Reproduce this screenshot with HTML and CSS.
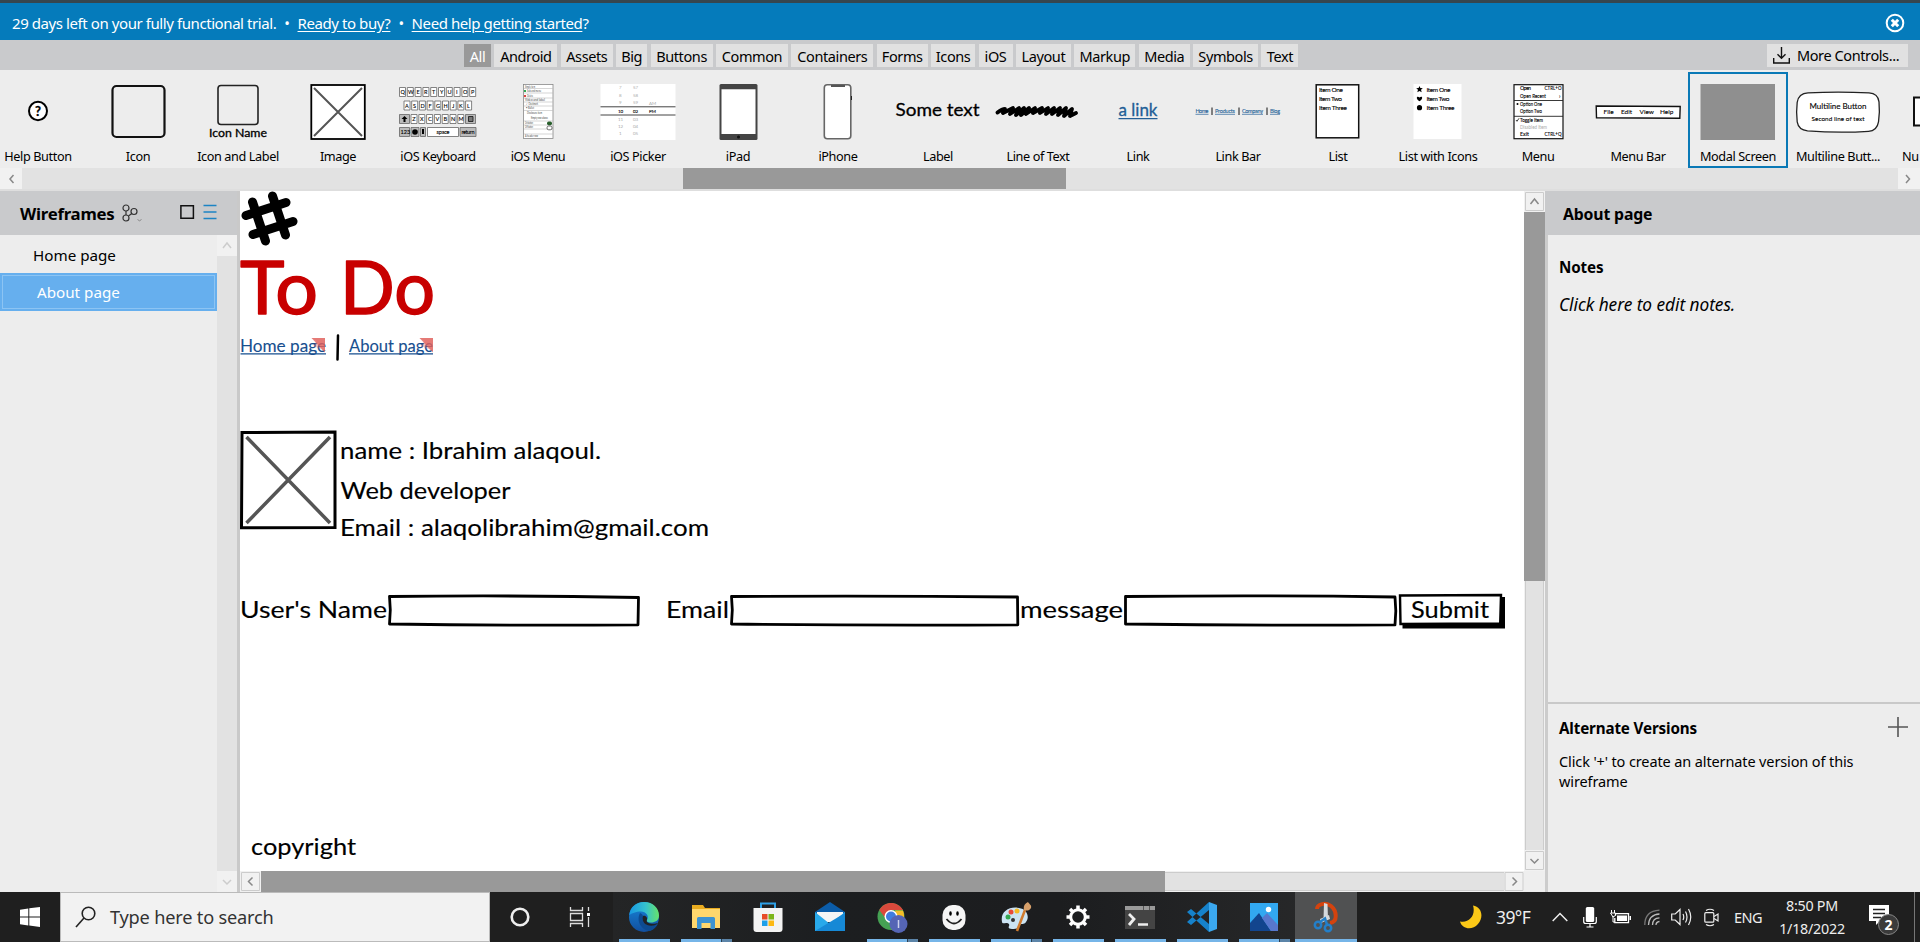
FILE: index.html
```html
<!DOCTYPE html>
<html lang="en">
<head>
<meta charset="utf-8">
<title>About page</title>
<link rel="stylesheet" href="styles.css">
</head>
<body>
<div class="trial">
  <p class="trial-text">29 days left on your fully functional trial. <b>•</b> <u>Ready to buy?</u> <b>•</b> <u>Need help getting started</u>?</p>
  <svg class="trial-close" width="20" height="20" viewBox="0 0 20 20"><circle cx="10" cy="10" r="8.3" fill="none" stroke="#fff" stroke-width="2"/><path d="M6.8 6.8l6.4 6.4M13.2 6.8l-6.4 6.4" stroke="#fff" stroke-width="3"/></svg>
</div>

<div class="tabs">
  <div class="tab-list">
    <span class="tab active">All</span><span class="tab">Android</span><span class="tab">Assets</span><span class="tab">Big</span><span class="tab">Buttons</span><span class="tab">Common</span><span class="tab">Containers</span><span class="tab">Forms</span><span class="tab">Icons</span><span class="tab">iOS</span><span class="tab">Layout</span><span class="tab">Markup</span><span class="tab">Media</span><span class="tab">Symbols</span><span class="tab">Text</span>
  </div>
  <div class="tab more"><svg width="17" height="17" viewBox="0 0 17 17" fill="none" stroke="#111" stroke-width="1.4"><path d="M8.5 0v11M4.5 7.2l4 4 4-4M.7 11v5h15.6v-5"/></svg><span>More Controls...</span></div>
</div>

<div class="library">
  <div class="item"><svg class="thumb" viewBox="0 0 96 72"><ellipse cx="48" cy="36" rx="9" ry="9.2" fill="#fff" stroke="#000" stroke-width="2"/><text x="48" y="41" class="hand bold" font-size="13" text-anchor="middle">?</text></svg><span>Help Button</span></div>
  <div class="item"><svg class="thumb" viewBox="0 0 96 72"><rect x="22.500" y="11" width="52" height="51" rx="4" fill="none" stroke="#111" stroke-width="2.200"/></svg><span>Icon</span></div>
  <div class="item"><svg class="thumb" viewBox="0 0 96 72"><rect x="28" y="10.500" width="40" height="39" rx="3" fill="none" stroke="#222" stroke-width="1.600"/><text x="19" y="61.500" class="hand" font-size="11.500" textLength="58" lengthAdjust="spacingAndGlyphs">Icon Name</text></svg><span>Icon and Label</span></div>
  <div class="item"><svg class="thumb" viewBox="0 0 96 72"><rect x="21.300" y="10" width="53.500" height="54" fill="#fff" stroke="#000" stroke-width="1.800"/><path d="M24 13l48 48M72 13L24 61" stroke="#555" stroke-width="2"/></svg><span>Image</span></div>
  <div class="item"><svg class="thumb" viewBox="0 0 96 72">
    <g fill="#fff" stroke="#666" stroke-width=".8"><path d="M9.500 12.500h6v9h-6zM17.300 12.500h6v9h-6zM25.100 12.500h6v9h-6zM32.900 12.500h6v9h-6zM40.700 12.500h6v9h-6zM48.500 12.500h6v9h-6zM56.300 12.500h6v9h-6zM64.100 12.500h6v9h-6zM71.900 12.500h6v9h-6zM79.700 12.500h6v9h-6zM14 26h6v9h-6zM21.700 26h6v9h-6zM29.400 26h6v9h-6zM37.100 26h6v9h-6zM44.800 26h6v9h-6zM52.500 26h6v9h-6zM60.200 26h6v9h-6zM67.900 26h6v9h-6zM75.600 26h6v9h-6zM21 39.500h6v9h-6zM28.800 39.500h6v9h-6zM36.600 39.500h6v9h-6zM44.400 39.500h6v9h-6zM52.200 39.500h6v9h-6zM60 39.500h6v9h-6zM67.800 39.500h6v9h-6zM37.500 52.500h31v9h-31z"/><path fill="#bbb" d="M9.500 39.500h10v9h-10zM75.500 39.500h10v9h-10zM9.500 52.500h10v9h-10zM21 52.500h8v9h-8zM30.500 52.500h5v9h-5zM70 52.500h16v9H70z"/></g>
    <g class="hand tiny" font-size="5.500"><text y="19"><tspan x="10.500">Q</tspan><tspan x="18">W</tspan><tspan x="26.500">E</tspan><tspan x="34">R</tspan><tspan x="42">T</tspan><tspan x="50">Y</tspan><tspan x="57.500">U</tspan><tspan x="66">I</tspan><tspan x="73">O</tspan><tspan x="81">P</tspan></text><text y="32.500"><tspan x="15">A</tspan><tspan x="23">S</tspan><tspan x="30.500">D</tspan><tspan x="38.500">F</tspan><tspan x="46">G</tspan><tspan x="53.500">H</tspan><tspan x="62">J</tspan><tspan x="69">K</tspan><tspan x="77">L</tspan></text><text y="46"><tspan x="22.300">Z</tspan><tspan x="30">X</tspan><tspan x="38">C</tspan><tspan x="45.500">V</tspan><tspan x="53.500">B</tspan><tspan x="61">N</tspan><tspan x="68.500">M</tspan></text><text x="10.500" y="59">123</text><text x="46.500" y="59" textLength="13">space</text><text x="71.500" y="59" textLength="13">return</text></g>
    <path d="M14.500 41l3 3h-2v3h-2v-3h-2z"/><circle cx="25" cy="57" r="2.800"/><path d="M32 54h2v5h-2z"/><path d="M78.500 41.500h4.500v5h-4.500z" fill="#777" stroke="#111" stroke-width=".8"/></svg><span>iOS Keyboard</span></div>
  <div class="item"><svg class="thumb" viewBox="0 0 96 72"><rect x="33.500" y="9.500" width="29.500" height="54" fill="#fff" stroke="#888" stroke-width=".8"/><path d="M34 13.500h29M34 18h29M34 23h29M34 27h29M34 31h29M34 35.500h29M34 46h29M34 50h29M34 54h29M34 59h29" stroke="#bbb" stroke-width=".6"/><g class="hand micro" font-size="3"><text x="35" y="12.500" textLength="10" lengthAdjust="spacingAndGlyphs">Simple item</text><text x="37" y="17" textLength="14" lengthAdjust="spacingAndGlyphs">Sub and menu</text><text x="37" y="22" textLength="6" lengthAdjust="spacingAndGlyphs">Delete</text><text x="35" y="26.300" textLength="20" lengthAdjust="spacingAndGlyphs">Video and label</text><text x="36" y="30.300" textLength="12" lengthAdjust="spacingAndGlyphs">✓ Checkmark</text><text x="36" y="34.300" textLength="8" lengthAdjust="spacingAndGlyphs">• Bullet</text><text x="37" y="38.500" textLength="15" lengthAdjust="spacingAndGlyphs">Disclosure item</text><text x="41" y="44" textLength="17" lengthAdjust="spacingAndGlyphs">Empty row above</text><text x="35" y="49.300" textLength="8" lengthAdjust="spacingAndGlyphs">On button</text><text x="35" y="53.300" textLength="8" lengthAdjust="spacingAndGlyphs">Off button</text><text x="35" y="62.300" textLength="13" lengthAdjust="spacingAndGlyphs">A header row</text></g><path d="M34 16h2" stroke="#3a5" stroke-width="2"/><path d="M34 21h2" stroke="#d44" stroke-width="2"/><rect x="57" y="46.500" width="5" height="3.800" rx="1.700" fill="#285f2c"/><rect x="57" y="51" width="5" height="3.800" rx="1.700" fill="#fff" stroke="#333" stroke-width=".7"/></svg><span>iOS Menu</span></div>
  <div class="item"><svg class="thumb" viewBox="0 0 96 72"><path d="M10.500 9h75v56h-75z" fill="#fff"/><g class="hand pale" font-size="4.500"><text x="29" y="14">7</text><text x="43" y="14">57</text><text x="29" y="22">8</text><text x="43" y="22">58</text><text x="29" y="29">9</text><text x="43" y="29">59</text><text x="59" y="30">AM</text><text x="28" y="46">11</text><text x="43" y="46">03</text><text x="28" y="53">12</text><text x="43" y="53">04</text><text x="29" y="60">1</text><text x="43" y="60">05</text></g><g class="hand tiny" font-size="4.500"><text x="28" y="37.800">10</text><text x="43" y="37.800">02</text><text x="59" y="37.800">PM</text></g><path d="M10.500 31.800h75M10.500 40h75" stroke="#444" stroke-width="1"/></svg><span>iOS Picker</span></div>
  <div class="item"><svg class="thumb" viewBox="0 0 96 72"><rect x="29.500" y="9" width="38" height="56" rx="1.500" fill="#444"/><path d="M31.500 14.300h34V59h-34z" fill="#fff"/><circle cx="48.500" cy="62" r="1.500" fill="#111"/></svg><span>iPad</span></div>
  <div class="item"><svg class="thumb" viewBox="0 0 96 72"><rect x="34.300" y="9.700" width="26.500" height="54" rx="3" fill="#fff" stroke="#666" stroke-width="1.600"/><path d="M41 11h14" stroke="#555" stroke-width="2"/><path d="M61.500 21v4" stroke="#222"/></svg><span>iPhone</span></div>
  <div class="item"><svg class="thumb" viewBox="0 0 96 72"><text x="5.500" y="41" class="hand" font-size="18" textLength="84" lengthAdjust="spacingAndGlyphs">Some text</text></svg><span>Label</span></div>
  <div class="item"><svg class="thumb" viewBox="0 0 96 72"><path d="M7.500 37.500Q12 34 15 34L13 38 23 33 20 39 29 33 26 40 34 33 31 40 39 33 36 39 45 33 43 38 52 33 50 38 58 33 56 39 64 33 62 39 70 33 68 40 76 33 74 41 82 34 80 41 86 38" fill="none" stroke="#000" stroke-width="3.800" stroke-linejoin="round" stroke-linecap="round"/></svg><span>Line of Text</span></div>
  <div class="item"><svg class="thumb" viewBox="0 0 96 72"><text x="28.500" y="41" class="hand blue" font-size="17" textLength="39" lengthAdjust="spacingAndGlyphs">a link</text><path d="M28.500 43.700h39" stroke="#235f97" stroke-width="1.300"/></svg><span>Link</span></div>
  <div class="item"><svg class="thumb" viewBox="0 0 96 72"><g class="hand blue tiny" font-size="5.500"><text x="5.500" y="38" textLength="13">Home</text><text x="25" y="38" textLength="20">Products</text><text x="52" y="38" textLength="21">Company</text><text x="80" y="38" textLength="10">Blog</text></g><path d="M5.500 39.300h13M25 39.300h20M52 39.300h21M80 39.300h10" stroke="#235f97" stroke-width=".7"/><path d="M22 32.500v7.500M49 32.500v7.500M77 32.500v7.500" stroke="#111"/></svg><span>Link Bar</span></div>
  <div class="item"><svg class="thumb" viewBox="0 0 96 72"><rect x="26.200" y="9.800" width="42.500" height="53" fill="#fff" stroke="#111" stroke-width="1.500"/><g class="hand tiny" font-size="6.500"><text x="29" y="16.500" textLength="24">Item One</text><text x="29" y="25.500" textLength="23">Item Two</text><text x="29" y="34.700" textLength="28">Item Three</text></g></svg><span>List</span></div>
  <div class="item"><svg class="thumb" viewBox="0 0 96 72"><path d="M23.500 9h48v55h-48z" fill="#fff"/><path d="M29.500 11l.9 2.100 2.400.2-1.800 1.500.7 2.400-2.200-1.300-2.200 1.300.7-2.400-1.800-1.500 2.400-.2zM29.500 26.200c-4.500-3-2.500-6 0-3.800 2.500-2.200 4.500.8 0 3.800z"/><circle cx="29.500" cy="32.700" r="2.600"/><g class="hand tiny" font-size="6.500"><text x="36.500" y="16.500" textLength="24">Item One</text><text x="36.500" y="25.500" textLength="23">Item Two</text><text x="36.500" y="34.700" textLength="28">Item Three</text></g></svg><span>List with Icons</span></div>
  <div class="item"><svg class="thumb" viewBox="0 0 96 72"><rect x="24" y="9.700" width="49" height="54" fill="#fff" stroke="#111" stroke-width="1.200"/><path d="M24 25.500h49M24 41.300h49" stroke="#222" stroke-width=".9"/><g class="hand tiny" font-size="5.300"><text x="30" y="15" textLength="11">Open</text><text x="54.500" y="15" textLength="17" lengthAdjust="spacingAndGlyphs">CTRL+O</text><text x="30" y="22.500" textLength="26" lengthAdjust="spacingAndGlyphs">Open Recent</text><text x="69" y="22.500">›</text><text x="30" y="31" textLength="22" lengthAdjust="spacingAndGlyphs">Option One</text><text x="30" y="38" textLength="22" lengthAdjust="spacingAndGlyphs">Option Two</text><text x="30" y="46.700" textLength="23" lengthAdjust="spacingAndGlyphs">Toggle Item</text><text x="30" y="53.500" class="pale" textLength="27" lengthAdjust="spacingAndGlyphs">Disabled Item</text><text x="30" y="61">Exit</text><text x="54.500" y="61" textLength="17" lengthAdjust="spacingAndGlyphs">CTRL+Q</text></g><circle cx="27.500" cy="29" r="1"/><path d="M26 45l1 1.300 2-3" fill="none" stroke="#111" stroke-width=".8"/></svg><span>Menu</span></div>
  <div class="item"><svg class="thumb" viewBox="0 0 96 72"><path d="M6.200 31l84 .5-.4 11.800-83.300-.5z" fill="#fff" stroke="#111" stroke-width="1.400"/><g class="hand tiny" font-size="6.500"><text x="13.500" y="38.700">File</text><text x="31" y="38.700">Edit</text><text x="49.500" y="38.700">View</text><text x="70" y="38.700">Help</text></g></svg><span>Menu Bar</span></div>
  <div class="item selected"><svg class="thumb" viewBox="0 0 96 72"><path d="M10.500 9h74.500v56h-74.500z" fill="#8f8f8f"/></svg><span>Modal Screen</span></div>
  <div class="item"><svg class="thumb" viewBox="0 0 96 72"><path d="M18 17.800q30-1.500 61 0 9 .5 10 9 1 10-.5 20-1.500 9-10 9.500-30 2-61-.5-9-1-10.300-9-1.200-9 0-19.500 1.300-9 10.800-9.500z" fill="#fff" stroke="#222" stroke-width="1.300"/><g class="hand"><text class="tiny" x="19.500" y="34" font-size="8" textLength="57">Multiline Button</text><text class="tiny" x="21.500" y="45.500" font-size="6.300" textLength="53">Second line of text</text></g></svg><span>Multiline Butt...</span></div>
  <div class="item last"><svg class="thumb" viewBox="0 0 96 72"><path d="M30 22.500h-6v28h6" fill="#fff" stroke="#111" stroke-width="2"/></svg><span>Nu</span></div>
</div>
<div class="lib-scroll"><svg width="22" height="21" viewBox="0 0 22 21"><path d="M13.500 7l-3.500 4 3.500 4" class="arrow"/></svg><div class="lib-track"><i></i></div><svg width="22" height="21" viewBox="0 0 22 21"><path d="M8 7l3.500 4L8 15" class="arrow"/></svg></div>

<div class="work">
  <aside class="left">
    <header class="panel-head nav-head"><h2>Wireframes</h2>
      <svg width="20" height="19" viewBox="0 0 20 19" fill="none" stroke="#333" stroke-width="1.200"><circle cx="4" cy="4" r="3"/><circle cx="4" cy="14" r="3"/><circle cx="12" cy="7.500" r="3"/><path d="M4 7v4M6.500 12l3.300-2.500"/><path d="M15.500 15.500l2 1.300 2-1.300" stroke="#777" stroke-width=".8"/></svg>
      <svg class="views" width="37" height="16" viewBox="0 0 37 16" fill="none"><path d="M.9 1.700h12.500v12.500H.9z" stroke="#111" stroke-width="1.500"/><path d="M23.500 1.500h13M23.500 8h13M23.500 14.500h13" stroke="#1c84c4" stroke-width="1.500"/></svg>
    </header>
    <div class="left-body">
      <nav><a>Home page</a><a class="current">About page</a></nav>
      <div class="vbar faint"><svg width="20" height="21" viewBox="0 0 20 21"><path d="M6 13l4-5 4 5" class="arrow"/></svg><i></i><svg width="20" height="21" viewBox="0 0 20 21"><path d="M6 9l4 4 4-4" class="arrow"/></svg></div>
    </div>
  </aside>

  <main class="center">
    <svg class="canvas" viewBox="240 191 1284 680" width="1284" height="680">
      <g fill="none" stroke="#000" stroke-width="9" stroke-linecap="round"><path d="M253 202l13 39M273 196l13 39M246.500 215.500l40-13M253.500 234.500l40-13" transform="translate(-.5 0)"/></g>
      <g class="hand title" font-size="73"><text x="240" y="313.500" textLength="78" lengthAdjust="spacingAndGlyphs">To</text><text x="340" y="313.500" textLength="95" lengthAdjust="spacingAndGlyphs">Do</text></g>
      <g class="hand link" font-size="17"><text x="240" y="352" textLength="86" lengthAdjust="spacingAndGlyphs">Home page</text><text x="349" y="352" textLength="84" lengthAdjust="spacingAndGlyphs">About page</text></g>
      <path d="M240.500 353.800H326M349 353.800h84" stroke="#174f8f" stroke-width="1.200"/>
      <path d="M338 335.500l-.5 24" stroke="#000" stroke-width="2.500" stroke-linecap="round"/>
      <path d="M311.500 338h13.500v14.500zM419.500 338H433v14.500z" fill="#e0605c" opacity=".75"/>
      <path d="M311.500 338l5 3-3 5 11.500 5v-13zM419.500 338l5 3-3 5 11.500 5v-13z" fill="#e0605c" opacity=".35"/>
      <path d="M242 432.500l93-.5v95.500l-93.500.3z" fill="#fff" stroke="#000" stroke-width="3"/>
      <path d="M246.500 437l83.500 86M330 437l-83.500 86" stroke="#555" stroke-width="3.500"/>
      <g class="hand body-text" font-size="23.500">
        <text x="340" y="459" textLength="261" lengthAdjust="spacingAndGlyphs">name : Ibrahim alaqoul.</text>
        <text x="340.500" y="499" textLength="170" lengthAdjust="spacingAndGlyphs">Web developer</text>
        <text x="340" y="536" textLength="369" lengthAdjust="spacingAndGlyphs">Email : alaqolibrahim@gmail.com</text>
        <text x="240" y="617.500" textLength="147" lengthAdjust="spacingAndGlyphs">User's Name</text>
        <text x="666" y="617.500" textLength="63" lengthAdjust="spacingAndGlyphs">Email</text>
        <text x="1020" y="617.500" textLength="103" lengthAdjust="spacingAndGlyphs">message</text>
        <text x="251" y="854.500" textLength="105" lengthAdjust="spacingAndGlyphs">copyright</text>
      </g>
      <g fill="#fff" stroke="#000" stroke-width="2.800" stroke-linejoin="round">
        <path d="M389.500 596.500q125-1.500 249 1l-.5 27.300q-125 1-248.500-.8l.8-14z"/>
        <path d="M731.500 596.500q143-1 286 .5l.3 27.800q-143 1-286.300-.8l.8-14z"/>
        <path d="M1125.500 596.500q140-1.500 269.500.5l.8 14-.8 13.800q-135 1-269.500-.8z"/>
      </g>
      <path d="M1402.500 597h102.500v31.500h-102.500z" fill="#000"/>
      <path d="M1400 595.500l101-.5-.8 28.500-99.700.5z" fill="#fff" stroke="#000" stroke-width="2.400"/>
      <text class="hand body-text" x="1411" y="617.500" font-size="23.500" textLength="78" lengthAdjust="spacingAndGlyphs">Submit</text>
    </svg>
    <div class="vbar doc-v"><svg width="21" height="21" viewBox="0 0 21 21"><path d="M1.500 1.500h18v18h-18z" class="btn"/><path d="M6.500 13l4-5 4 5" class="arrow"/></svg><b></b><i></i><svg width="21" height="21" viewBox="0 0 21 21"><path d="M1.500 1.500h18v18h-18z" class="btn"/><path d="M6.500 9l4 4 4-4" class="arrow"/></svg></div>
    <div class="hbar"><svg width="21" height="21" viewBox="0 0 21 21"><path d="M1.500 1.500h18v18h-18z" class="btn"/><path d="M12.500 6.500l-4 4 4 4" class="arrow"/></svg><b></b><i></i><svg width="20" height="21" viewBox="0 0 20 21"><path d="M1 1.500h18v18H1z" class="btn"/><path d="M8.500 6.500l4 4-4 4" class="arrow"/></svg></div>
  </main>

  <aside class="right">
    <header class="panel-head"><h2 class="page-name">About page</h2></header>
    <section class="notes"><h3>Notes</h3><p>Click here to edit notes.</p></section>
    <section class="alts"><div class="alt-head"><h3>Alternate Versions</h3><svg width="20" height="20" viewBox="0 0 20 20"><path d="M10 0v20M0 10h20" stroke="#555" stroke-width="1.600"/></svg></div><p>Click '+' to create an alternate version of this wireframe</p></section>
  </aside>
</div>

<footer class="taskbar">
  <div class="start"><svg width="20" height="20" viewBox="0 0 20 20" fill="#fff"><path d="M0 2.800L8.300 1.500v8H0zM9.300 1.300L20 0v9.500H9.300zM0 10.500h8.300v8L0 17.200zM9.300 10.500H20V20L9.300 18.600z"/></svg></div>
  <div class="search"><svg width="22" height="22" viewBox="0 0 22 22" fill="none" stroke="#222" stroke-width="1.600"><circle cx="13.500" cy="7.500" r="6.300"/><path d="M9 12L1 21"/></svg><span>Type here to search</span></div>
  <div class="task cortana"><svg width="20" height="20" viewBox="0 0 20 20"><circle cx="10" cy="10" r="8.300" fill="none" stroke="#eee" stroke-width="2.600"/></svg></div>
  <div class="task view"><svg width="22" height="20" viewBox="0 0 22 20" fill="none" stroke="#ddd" stroke-width="1.300"><path d="M1.500 0v3.500h12V0M1.500 6.500h12v7h-12zM1.500 20v-3.500h12V20M19.500 0v4M19.500 10v10"/><path d="M18 6h3v3h-3z" fill="#fff" stroke="none"/></svg></div>
  <div class="apps">
    <div class="app run"><svg viewBox="0 0 32 32"><defs><linearGradient id="ea" x1="0" x2="1"><stop stop-color="#1797e3"/><stop offset=".55" stop-color="#35c1ce"/><stop offset="1" stop-color="#66e36a"/></linearGradient><linearGradient id="eb" x1="0" y1="0" x2="0" y2="1"><stop stop-color="#1687dc"/><stop offset="1" stop-color="#124f9e"/></linearGradient></defs><circle cx="16" cy="16" r="15" fill="url(#eb)"/><path d="M1.200 14C2 6 8.500 1 16 1c9 0 15 6 15 13.500 0 5-4 7-8 7-3 0-5-1-4-2.500 2.500-4-1-8.500-6-8.500-5 0-9.500 2-11.800 3.500z" fill="url(#ea)"/><path d="M12 12c-4 8 1 17 10 18 4-1.500 6.500-4 8-7.500-8 4-17 1-15-6 .5-2-1-4-3-4.500z" fill="#0d4b91"/><path d="M15 15c-2 7 4 10.500 10 9.500 3 0 5-2.500 5-2.500-4 1.500-13 1-11-3.500.8-2-2-4.500-4-3.500z" fill="#202326"/></svg></div>
    <div class="app run multi"><svg viewBox="0 0 32 32"><path d="M2 4h11l2 3h15v20H2z" fill="#e9ac20"/><path d="M2 8h28v19H2z" fill="#ffd76d"/><path d="M7 17.500q0-1.500 1.500-1.500h15q1.500 0 1.500 1.500V28h-4.500v-6h-9v6H7z" fill="#3d93d2"/></svg></div>
    <div class="app"><svg viewBox="0 0 32 32"><path d="M9 8V2.500h14V8" fill="none" stroke="#2ea0e6" stroke-width="2"/><path d="M1.500 7h29v21q0 3-3 3h-23q-3 0-3-3z" fill="#f3f3f3"/><path d="M10 13h5.500v5.500H10z" fill="#e74b27"/><path d="M16.500 13H22v5.500h-5.500z" fill="#7bb51a"/><path d="M10 19.500h5.500V25H10z" fill="#1d9fe8"/><path d="M16.500 19.500H22V25h-5.500z" fill="#fdb913"/></svg></div>
    <div class="app"><svg viewBox="0 0 32 32"><path d="M1 11L16 1l15 10v10H1z" fill="#0b5ca8"/><path d="M3 11h26v10H3z" fill="#f5f5f5"/><path d="M1 11l15 12 15-12v19H1z" fill="#28a9ea"/><path d="M1 30l30-18v18z" fill="#1689d6"/></svg></div>
    <div class="app run multi"><svg viewBox="0 0 32 32"><circle cx="15" cy="15.500" r="13.500" fill="#45a153"/><path d="M3.300 9C6 4.500 10.500 2 15 2c5 0 9.500 2.700 12 7H15l-5 9z" fill="#d9493c"/><path d="M27 9.500c3 7 0 17-11.500 19.500L21 16l-2-6.500z" fill="#f4bd27"/><circle cx="15" cy="15.500" r="6.500" fill="#fff"/><circle cx="15" cy="15.500" r="5" fill="#3f7de0"/><circle cx="22.500" cy="23" r="9" fill="#5565b5"/><path d="M22.500 19v8" stroke="#cbd1ed" stroke-width="1.500"/></svg></div>
    <div class="app run"><svg viewBox="0 0 32 32"><rect x="4.500" y="4" width="23" height="25" rx="10" fill="#f5f5f5"/><path d="M8.500 18q7.500 9 15 0" fill="none" stroke="#222" stroke-width="1.800"/><ellipse cx="12.500" cy="12.500" rx="1.300" ry="2.200"/><ellipse cx="19.500" cy="12.500" rx="1.300" ry="2.200"/></svg></div>
    <div class="app run multi"><svg viewBox="0 0 32 32"><path d="M2 21C0 11 9 5 19 7c8 1 11 9 7 14-2 3-5 1-6 3-1 3-4 4-8 4-3 0-4-1-3-3 1-2-1-3-3-3-1 0-4 1-4-1z" fill="#cce4f3"/><circle cx="8" cy="16" r="2.500" fill="#35a852"/><circle cx="11" cy="11" r="2.500" fill="#e94b39"/><circle cx="17" cy="10" r="2.500" fill="#f6ba22"/><circle cx="13" cy="19" r="2" fill="#333"/><path d="M17 30l8-21" stroke="#cf7b2e" stroke-width="2.500"/><path d="M24 9c-1-5 2-7 4-8 1 2 4 3 3 6-2 3-4 3-7 2z" fill="#d7a06b"/></svg></div>
    <div class="app run"><svg viewBox="0 0 32 32"><circle cx="16" cy="16" r="7.300" fill="none" stroke="#fff" stroke-width="3"/><path d="M16 4.500v4M16 23.500v4M4.500 16h4M23.500 16h4M8 8l3 3M21 21l3 3M24 8l-3 3M11 21l-3 3" stroke="#fff" stroke-width="3.500"/></svg></div>
    <div class="app run"><svg viewBox="0 0 32 32"><path d="M1 5h30v23H1z" fill="#444"/><path d="M1 5h30v4H1z" fill="#999"/><path d="M19 5h1v4h-1zM25 5h1v4h-1z" fill="#555"/><path d="M5 13l5 5-5 6" fill="none" stroke="#eee" stroke-width="2.800"/><path d="M14 23.500h10" stroke="#eee" stroke-width="2.500"/></svg></div>
    <div class="app run"><svg viewBox="0 0 32 32"><path d="M23 1l8 3v24l-8 3z" fill="#3ba8ef"/><path d="M1 21l4 3L23 9V1zM1 11l4-3 18 15v8z" fill="#1682cb"/></svg></div>
    <div class="app run multi"><svg viewBox="0 0 32 32"><path d="M2 2h28v28H2z" fill="#32a8f0"/><path d="M2 22l9-10 12 18H2z" fill="#12458e"/><path d="M14 17l5-5 11 12v6h-7z" fill="#5877cd"/><circle cx="20.500" cy="8.500" r="2.700" fill="#fff"/></svg></div>
    <div class="app run open"><svg viewBox="0 0 32 32"><path d="M7 8c0-5 9-7 14-3 6 5 7 16-1 17" fill="none" stroke="#d4430e" stroke-width="4"/><path d="M14 2l3.500 1 .5 15h-4.500zM10 18l9-4 1 4-9 4z" fill="#d5dade"/><circle cx="8" cy="24" r="3.200" fill="none" stroke="#237fc9" stroke-width="2.500"/><circle cx="18" cy="27" r="3.200" fill="none" stroke="#237fc9" stroke-width="2.500"/><path d="M10 21l5-3.500 2 6" fill="none" stroke="#237fc9" stroke-width="2.500"/></svg></div>
  </div>
  <div class="tray">
    <svg class="moon" width="24" height="24" viewBox="0 0 24 24"><path d="M14 .5C23 2 25 12 19 19 13 26 3 24 1 16.500c9 2 16-6 13-16z" fill="#fbc817"/></svg>
    <span class="temp">39°F</span>
    <svg class="chev" width="16" height="10" viewBox="0 0 16 10"><path d="M.7 9L8 1.500 15.300 9" fill="none" stroke="#eee" stroke-width="1.500"/></svg>
    <svg class="mic" width="14" height="21" viewBox="0 0 14 21"><rect x="2.800" y="0" width="8.400" height="15" rx="1.500" fill="#fff"/><path d="M.7 10v4.500q0 2 2 2h8.600q2 0 2-2V10M7 17v3.300M3.500 20h7" fill="none" stroke="#fff" stroke-width="1.200"/></svg>
    <svg class="bat" width="21" height="15" viewBox="0 0 21 15"><path d="M5.500 5.500V3.700h13v9H4.800V8" fill="none" stroke="#fff" stroke-width="1.300"/><path d="M7 5.500h10v5.500H7zM19.500 6h1.500v4h-1.500z" fill="#fff"/><path d="M1.500 0v3M4.500 0v3M.5 3h5v2.500L3 7zM3 6v6h2" fill="none" stroke="#fff"/></svg>
    <svg class="wifi" width="17" height="17" viewBox="0 0 17 17" fill="none" stroke="#bbb" stroke-width="1.300"><path d="M.8 16Q.8 2 15.500 1.200" stroke="#777"/><path d="M4.500 16Q5 5.500 15.500 5M8.500 16Q8.500 9 15.500 8.800M12 16q0-3 3.500-3.500"/></svg>
    <svg class="vol" width="21" height="18" viewBox="0 0 21 18" fill="none" stroke="#eee" stroke-width="1.200"><path d="M.7 6h3.500L9 1.500v15L4.200 12H.7zM12 6q1.500 3 0 6M14.500 3.500q3 5.500 0 11M17.500 1q4.500 8 0 16"/></svg>
    <svg class="cam" width="15" height="19" viewBox="0 0 15 19" fill="none" stroke="#eee" stroke-width="1.200"><rect x=".8" y="4.700" width="9" height="9.500" rx="1"/><path d="M10 8.500l4-2.500v7l-4-2.500M2 2.500Q6 0 10 2.500M2 16.500q4 2.500 8 0"/></svg>
    <span class="lang">ENG</span>
    <div class="clock"><span>8:50 PM</span><span>1/18/2022</span></div>
    <svg class="notif" width="31" height="31" viewBox="0 0 31 31"><path d="M0 1h20v16h-9l-4 4v-4H0z" fill="#fff"/><path d="M4 5.500h12M4 9.500h12M4 13.500h8" stroke="#222" stroke-width="1.500"/><circle cx="19.500" cy="20.500" r="10" fill="#3b3b3b" stroke="#888"/><text x="19.500" y="25.500" class="badge" text-anchor="middle">2</text></svg>
    <i class="peek"></i>
  </div>
</footer>
</body>
</html>
```

FILE: styles.css
```css
* { box-sizing: border-box; }
body { margin: 0; width: 1920px; height: 942px; overflow: hidden; display: flex; flex-direction: column; background: #ededed; color: #000; font-family: "Noto Sans", "Open Sans", sans-serif; font-size: 14px; }
h2, h3, p { margin: 0; }
svg { display: block; flex: none; }

.trial { height: 40px; flex: none; border-top: 3px solid #36464e; background: #057bbb; color: #fff; display: flex; align-items: center; justify-content: space-between; padding: 2px 15px 0 12px; }
.trial-text { font-size: 15px; letter-spacing: -.42px; }
.trial-text b { font-weight: 400; padding: 0 4.500px; }
.trial-text u { text-underline-offset: 2px; }

.tabs { height: 30px; flex: none; background: #c9cacc; display: flex; justify-content: space-between; padding: 4px 12px 3px 464px; }
.tab-list { display: grid; grid-template-columns: 27px 63px 52px 31px 62px 72px 82px 51px 44px 34px 55px 61px 51px 65px 37px; column-gap: 3.400px; }
.tab { background: #e1e1e1; height: 23px; line-height: 25px; text-align: center; font-size: 14.500px; letter-spacing: -.4px; white-space: nowrap; }
.tab.active { background: #999; color: #fff; }
.more { width: 141px; display: flex; align-items: center; gap: 7px; padding-left: 6px; }

.library { height: 98px; flex: none; display: flex; margin-left: -12px; padding-top: 2px; overflow: hidden; width: 1932px; }
.item { width: 100px; height: 96px; flex: none; border: 2px solid transparent; padding-top: 1px; display: flex; flex-direction: column; align-items: center; }
.item span { font-size: 12.700px; line-height: 19px; letter-spacing: -.4px; white-space: nowrap; }
.item.selected { border-color: #0a79b6; }
.item.last span { align-self: flex-start; padding-left: 12px; }
.thumb { width: 96px; height: 72px; }
.hand { font-family: Lato, sans-serif; fill: #000; stroke: #000; stroke-width: .3px; stroke-linejoin: round; }
.body-text { stroke-width: .15px; }
.tiny { stroke-width: .1px; }
.micro { stroke: none; fill: #444; }
.bold { font-weight: 700; }
.pale { fill: #aaa; stroke: none; }
.blue { fill: #235f97; stroke: #235f97; }
.title { fill: #c80000; stroke: #c80000; stroke-width: 1.500px; }
.link { fill: #174f8f; stroke: #174f8f; stroke-width: .1px; }

.lib-scroll { height: 23px; flex: none; display: flex; background: #f1f1f1; border-bottom: 2px solid #dedede; }
.lib-track { flex: 1; background: #e2e2e2; }
.lib-track i { display: block; width: 383px; height: 21px; margin-left: 661px; background: #999; }
.arrow { fill: none; stroke: #888; stroke-width: 1.500px; }
.btn { fill: #f1f1f1; stroke: #ccc; }

.work { height: 701px; flex: none; display: flex; }
.left { width: 240px; border-right: 3px solid #c9c9c9; display: flex; flex-direction: column; }
.panel-head { height: 44px; flex: none; background: #c9cacc; display: flex; align-items: center; padding-top: 1px; }
.panel-head h2 { font-size: 16.800px; letter-spacing: -.25px; }
.nav-head { padding-left: 20px; padding-right: 20px; }
.nav-head h2 { width: 102px; white-space: nowrap; }
.views { margin-left: auto; margin-bottom: 3px; }
.left-body { flex: 1; display: flex; justify-content: space-between; }
nav { width: 217px; padding-top: 1px; font-size: 15.200px; }
nav a { display: block; height: 37px; line-height: 39px; padding-left: 33px; }
nav .current { height: 38px; line-height: 36px; padding-left: 36px; color: #fff; background: #66afee; border: 1px solid #66afee; outline: 1px solid #8cc4f3; outline-offset: -3px; }
.vbar { display: flex; flex-direction: column; background: #f1f1f1; }
.vbar i { flex: 1; background: #e2e2e2; }
.faint { width: 20px; }
.faint .arrow { stroke: #ccc; }
.center { width: 1305px; display: grid; grid-template: 680px 21px / 1284px 21px; background: #eee; }
.canvas { background: #fff; }
.doc-v b { height: 369px; background: #999; }
.doc-v i { border: solid #ccc; border-width: 0 1px; margin-left: 1px; margin-right: 1px; }
.hbar { display: flex; background: #f1f1f1; }
.hbar b { width: 904px; background: #999; }
.hbar i { flex: 1; background: #e2e2e2; border: solid #ccc; border-width: 1px 0; margin: 1px 0; }
.right { width: 375px; border-left: 3px solid #ccc; display: flex; flex-direction: column; }
.right .panel-head { margin-left: -3px; padding-left: 18px; }
.right .page-name { font-size: 15.800px; letter-spacing: -.15px; }
.right h3 { font-size: 15.200px; letter-spacing: -.15px; line-height: 20px; }
.notes { flex: 1; padding: 22px 11px; }
.notes p { font-style: italic; font-size: 17.300px; line-height: 24px; margin-top: 16px; letter-spacing: -.05px; }
.alts { height: 190px; border-top: 2px solid #c9c9c9; padding: 13px 12px 0 11px; }
.alt-head { display: flex; justify-content: space-between; }
.alt-head h3 { padding-top: 1px; }
.alts p { font-size: 14.500px; line-height: 20px; margin-top: 13px; width: 320px; letter-spacing: -.12px; }

.taskbar { height: 50px; flex: none; display: flex; background: #1f1f1f; color: #eee; }
.start { width: 60px; display: grid; place-items: center; }
.search { width: 430px; background: #f2f2f2; border: 1px solid #bbb; color: #333; display: flex; align-items: center; gap: 13px; padding-left: 14px; font-size: 18.200px; letter-spacing: -.2px; }
.task { display: grid; place-items: center; }
.cortana { width: 60px; }
.view { width: 63px; padding-right: 3px; }
.apps { display: flex; background: linear-gradient(90deg, #242526, #1c1e20 30%, #1c1d1f 60%, #292a2b); }
.app { width: 62px; display: grid; grid-template: 47px 3px / 51px; justify-content: center; justify-items: center; align-items: center; }
.app svg { width: 32px; height: 32px; margin-top: 3px; }
.run::after { content: ""; width: 51px; height: 3px; background: #76b5e8; }
.multi::after { background: linear-gradient(90deg, #76b5e8 40px, #2c4052 40px, #2c4052 41px, #5b84a8 41px); }
.open { background: #505152; }
.open::after { width: 62px; }
.tray { flex: 1; display: flex; align-items: center; padding-left: 102px; white-space: nowrap; }
.tray svg, .tray span { flex: none; }
.temp { width: 46px; margin-left: 13px; font-size: 17.500px; letter-spacing: -.6px; }
.chev { margin-left: 10px; }
.mic { margin-left: 15px; }
.bat { margin-left: 13px; }
.wifi { margin-left: 13px; }
.vol { margin-left: 10px; }
.cam { margin-left: 12px; }
.lang { width: 34px; margin-left: 15px; font-size: 14.500px; letter-spacing: -.6px; }
.clock { width: 80px; margin-left: 4px; display: flex; flex-direction: column; align-items: center; font-size: 14.300px; line-height: 23px; letter-spacing: -.25px; }
.clock span { flex: none; }
.notif { margin-left: 17px; margin-top: 5px; }
.badge { font-size: 14px; font-weight: 700; fill: #fff; }
.peek { width: 1px; height: 50px; background: #777; margin-left: auto; margin-right: 5px; }
```
